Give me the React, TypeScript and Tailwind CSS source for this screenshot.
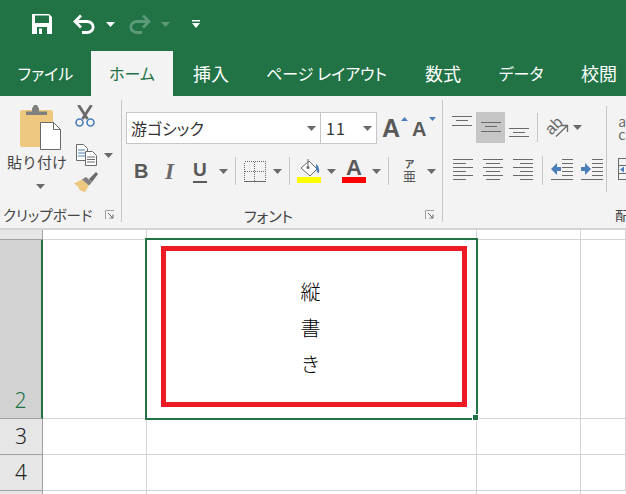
import React from "react"

const GRID_LINE = "border-[#d4d4d4]"

const Caret = ({ color = "#6a6a6a", className = "" }: { color?: string; className?: string }) => (
  <svg width="9" height="5" viewBox="0 0 9 5" className={`shrink-0 ${className}`}>
    <path d="M0 0h9L4.5 5z" fill={color} />
  </svg>
)

// groups of 1px bars, used by all the alignment buttons
const Bars = ({ bars, w = 20, h = 21 }: { bars: number[][]; w?: number; h?: number }) => (
  <svg width={w} height={h} viewBox={`0 0 ${w} ${h}`} shapeRendering="crispEdges" className="shrink-0">
    {bars.map(([x, y, width], i) => (
      <rect key={i} x={x} y={y} width={width} height="1" fill="#6a6a6a" />
    ))}
  </svg>
)

const Launcher = () => (
  <svg width="10" height="10" viewBox="0 0 10 10" className="shrink-0">
    <path d="M.5 9V.5H9" fill="none" stroke="#a0a0a0" />
    <path d="M3 3l5 5M8 4.500V8H4.500" fill="none" stroke="#6a6a6a" />
  </svg>
)

const Sep = ({ className = "" }: { className?: string }) => <div className={`w-px bg-[#c6c6c6] shrink-0 ${className}`} />

const SaveIcon = () => (
  <svg width="20" height="20" viewBox="0 0 20 20">
    <path d="M0 0h17l3 3v17H0z" fill="#fff" />
    <rect x="3" y="1.500" width="14" height="7.500" fill="#217346" />
    <rect x="5" y="13" width="10" height="7" fill="#217346" />
    <rect x="7" y="14.500" width="3" height="5.500" fill="#fff" />
  </svg>
)

const UndoIcon = ({ flip, color }: { flip?: boolean; color: string }) => (
  <svg width="22" height="20" viewBox="0 0 22 20" className={flip ? "-scale-x-100" : ""}>
    <path d="M8 1.500L2 7.500l6 6M2 7.500h12a6.200 5.500 0 0 1 0 11H9" fill="none" stroke={color} strokeWidth="2.800" />
  </svg>
)

const QatCustom = () => (
  <svg width="8" height="8" viewBox="0 0 8 8">
    <path d="M0 0h8v1.500H0zM0 3h8L4 8z" fill="#fff" />
  </svg>
)

const PasteIcon = () => (
  <svg width="41" height="45" viewBox="0 0 41 45">
    <rect x="0" y="5" width="33" height="37" rx="2" fill="#edc87e" />
    <path d="M6 10V6.500h6V3.500L14 0h3l2 3.500v3h8V10z" fill="#7f7f7f" />
    <path d="M20.500 17.500h13l7 7v20h-20z" fill="#fff" stroke="#6a6a6a" />
    <path d="M33.500 17.500v7h7" fill="none" stroke="#6a6a6a" />
  </svg>
)

const ScissorsIcon = () => (
  <svg width="20" height="22" viewBox="0 0 20 22">
    <path d="M3.500 0L12.500 14M16.500 0L7.500 14" stroke="#6a6a6a" strokeWidth="2.800" fill="none" />
    <circle cx="4.500" cy="17.500" r="3.500" fill="none" stroke="#4a7ebb" strokeWidth="1.600" />
    <circle cx="15.500" cy="17.500" r="3.500" fill="none" stroke="#4a7ebb" strokeWidth="1.600" />
  </svg>
)

const CopyIcon = () => (
  <svg width="21" height="22" viewBox="0 0 21 22">
    <path d="M.5.500h7l4 4v12h-11z" fill="#fff" stroke="#6a6a6a" />
    <path d="M2 6h7M2 9h7M2 12h7" stroke="#4a7ebb" />
    <path d="M9.500 7.500h7l4 4v10h-11z" fill="#fff" stroke="#6a6a6a" />
    <path d="M11 13h8M11 15.500h8M11 18h8" stroke="#6a6a6a" />
  </svg>
)

const BrushIcon = () => (
  <svg width="24" height="20" viewBox="0 0 24 20">
    <path d="M0 11.500l8-4 7 6-4 6.500-5-1.500-2-4z" fill="#edc87e" />
    <path d="M8 7.500l4-2.500 6 5-3 3.500z" fill="#7f7f7f" />
    <path d="M15 7l7-7 2 2-6 8z" fill="#6a6a6a" />
  </svg>
)

const BorderIcon = () => (
  <svg width="22" height="21" viewBox="0 0 22 21" shapeRendering="crispEdges">
    <path
      d="M.5.500h21v20H.5zM10.500 .500v20M.5 10.500h21"
      fill="none"
      stroke="#6a6a6a"
      strokeDasharray="1 1"
    />
    <path d="M0 20.500h22" stroke="#6a6a6a" />
  </svg>
)

const FillIcon = () => (
  <svg width="24" height="24" viewBox="0 0 24 24">
    <path d="M4 9l8-7 8 8-7 7z" fill="#fff" stroke="#6a6a6a" />
    <path d="M11 0v8" stroke="#6a6a6a" />
    <circle cx="11" cy="8.500" r="1.500" fill="#6a6a6a" />
    <path d="M19 5c3 2 3.500 6 3 9l-2-1-1-4z" fill="#4a7ebb" />
    <rect x="0" y="18" width="24" height="6" fill="#ffff00" />
  </svg>
)

const OrientationIcon = () => (
  <svg width="21" height="20" viewBox="0 0 21 20" className="overflow-visible">
    <text
      x="7"
      y="13"
      fontSize="16"
      textAnchor="middle"
      fill="#6a6a6a"
      fontFamily="Liberation Sans"
      transform="rotate(-45 7 8)"
    >
      ab
    </text>
    <path d="M9 18.500L20 8M14 7.500h6.500V14" fill="none" stroke="#6a6a6a" strokeWidth="1.300" />
  </svg>
)

const IndentIcon = ({ increase }: { increase?: boolean }) => (
  <svg width="22" height="21" viewBox="0 0 22 21" shapeRendering="crispEdges">
    <path d={increase ? "M0 8h4V4l6 6-6 6v-4H0z" : "M10 8H6V4L0 10l6 6v-4h4z"} fill="#4a7ebb" shapeRendering="auto" />
    {[0, 4, 8, 12, 16].map((y) => (
      <rect key={y} x="11" y={y} width="11" height="1" fill="#6a6a6a" />
    ))}
    <rect x="0" y="20" width="22" height="1" fill="#6a6a6a" />
  </svg>
)

const MergeIcon = () => (
  <svg width="8" height="22" viewBox="0 0 8 22" shapeRendering="crispEdges">
    <path d="M8 .500H.5v21H8M0 7.500h8M0 15.500h8" fill="none" stroke="#6a6a6a" />
    <path d="M2 11.500l4-3v6z" fill="#4a7ebb" shapeRendering="auto" />
  </svg>
)

const tabs = [
  { label: "ファイル", w: "w-[91px]", size: "text-[16px]" },
  { label: "ホーム", w: "w-[82px]", size: "text-[16px]", active: true },
  { label: "挿入", w: "w-[76px]", size: "text-[18px]" },
  { label: "ページ レイアウト", w: "w-[155px]", size: "text-[16px]" },
  { label: "数式", w: "w-[78px]", size: "text-[18px]" },
  { label: "データ", w: "w-[78px]", size: "text-[16px]" },
  { label: "校閲", w: "w-[78px]", size: "text-[18px]" },
]

const Ribbon = () => (
  <div className={`flex h-[134px] pt-[4px] pb-[6px] bg-[#f3f3f3] border-b-2 ${GRID_LINE} text-[#444444]`}>
    {/* clipboard */}
    <div className="w-[122px] shrink-0 flex flex-col border-r border-[#c6c6c6]">
      <div className="flex flex-1">
        <div className="w-[74px] pt-[5px] flex flex-col items-center">
          <div className="pl-[6px]">
            <PasteIcon />
          </div>
          <div className="text-[15px] leading-[24px] whitespace-nowrap">貼り付け</div>
          <Caret className="mt-[10px] ml-[6px]" />
        </div>
        <div className="pt-[5px] flex flex-col">
          <div className="h-[33px] pl-[1px]">
            <ScissorsIcon />
          </div>
          <div className="h-[34px] flex items-center pl-[2px]">
            <CopyIcon />
            <Caret className="ml-[7px] mt-[1px]" />
          </div>
          <BrushIcon />
        </div>
      </div>
      <div className="h-[16px] pt-[2px] flex items-center justify-between pl-[3px] pr-[6px]">
        <span className="text-[14.500px] leading-none whitespace-nowrap [font-feature-settings:'palt']">クリップボード</span>
        <Launcher />
      </div>
    </div>

    {/* font */}
    <div className="w-[321px] shrink-0 flex flex-col border-r border-[#c6c6c6]">
      <div className="flex-1 pl-[4px] pt-[12px]">
        <div className="flex items-center h-[32px]">
          <div className="w-[195px] h-full flex items-center justify-between pl-[4px] pr-[4px] bg-white border border-[#c6c6c6]">
            <span className="text-[16px] leading-none [font-feature-settings:'palt'] text-[#333333]">游ゴシック</span>
            <Caret />
          </div>
          <div className="w-[57px] h-full -ml-px flex items-center justify-between pl-[5px] pr-[4px] bg-white border border-[#c6c6c6]">
            <span className="text-[16px] leading-none tracking-[1px] text-[#333333]">11</span>
            <Caret />
          </div>
          <div className="relative ml-[5px] w-[26px] h-full font-['Liberation_Sans',sans-serif] font-bold text-[25px] leading-[32px] text-[#595959]">
            A
            <svg width="7" height="4" viewBox="0 0 7 4" className="absolute right-0 top-[5px]">
              <path d="M0 4h7L3.500 0z" fill="#4a7ebb" />
            </svg>
          </div>
          <div className="relative ml-[4px] w-[24px] h-full font-['Liberation_Sans',sans-serif] font-bold text-[20px] leading-[34px] text-[#595959]">
            A
            <svg width="7" height="4" viewBox="0 0 7 4" className="absolute right-0 top-[5px]">
              <path d="M0 0h7L3.500 4z" fill="#4a7ebb" />
            </svg>
          </div>
        </div>
        <div className="flex items-center h-[30px] mt-[12px] text-[#595959]">
          <span className="w-[15px] ml-[8px] font-['Liberation_Sans',sans-serif] font-bold text-[20px] leading-none">B</span>
          <span className="w-[12px] ml-[16px] font-['Liberation_Serif',serif] font-bold italic text-[23px] leading-none text-[#6a6a6a]">I</span>
          <span className="w-[14px] ml-[16px] font-['Liberation_Sans',sans-serif] font-bold text-[19px] leading-[22px] border-b-2 border-[#595959]">U</span>
          <Caret className="ml-[12px]" />
          <Sep className="h-[28px] ml-[7px]" />
          <div className="ml-[8px]">
            <BorderIcon />
          </div>
          <Caret className="ml-[7px]" />
          <Sep className="h-[28px] ml-[7px]" />
          <div className="ml-[7px]">
            <FillIcon />
          </div>
          <Caret className="ml-[6px]" />
          <div className="ml-[6px] w-[24px] flex flex-col items-center">
            <span className="font-['Liberation_Sans',sans-serif] font-bold text-[22px] leading-[18px] text-[#595959]">A</span>
            <div className="w-full h-[6px] bg-[#ff0000]" />
          </div>
          <Caret className="ml-[6px]" />
          <Sep className="h-[28px] ml-[7px]" />
          <div className="ml-[14px] w-[13px] flex flex-col items-center text-[#595959]">
            <span className="text-[10px] leading-[10px] font-bold">ア</span>
            <span className="text-[13px] leading-[14px]">亜</span>
          </div>
          <Caret className="ml-[11px]" />
        </div>
      </div>
      <div className="h-[16px] pt-[2px] flex items-center justify-between pl-[122px] pr-[7px]">
        <span className="text-[15px] leading-none whitespace-nowrap [font-feature-settings:'palt']">フォント</span>
        <Launcher />
      </div>
    </div>

    {/* alignment */}
    <div className="flex-1 min-w-0 overflow-hidden pt-[12px] pl-[5px] flex flex-col">
      <div className="flex h-[31px] items-start">
        <div className="w-[30px] h-full flex justify-center pt-[4px]">
          <Bars h={10} bars={[[0, 0, 20], [4, 4, 12], [0, 9, 20]]} />
        </div>
        <div className="w-[30px] h-full flex justify-center pt-[10px] bg-[#c6c6c6]">
          <Bars h={10} bars={[[0, 0, 20], [4, 4, 12], [0, 9, 20]]} />
        </div>
        <div className="w-[30px] h-full flex justify-center pt-[16px]">
          <Bars h={10} bars={[[0, 0, 20], [4, 4, 12], [0, 8, 20]]} />
        </div>
        <Sep className="h-[29px] ml-[4px] mt-px" />
        <div className="ml-[9px] mt-[6px]">
          <OrientationIcon />
        </div>
        <Caret className="ml-[5px] mt-[13px]" />
        <Sep className="h-[86px] ml-[24px] -mt-[6px]" />
        <div className="ml-[11px] mt-[3px] text-[14px] leading-[13px] text-[#6a6a6a]">
          a<br />c
        </div>
      </div>
      <div className="flex h-[30px] mt-[16px] items-start">
        <div className="w-[30px] flex justify-center">
          <Bars bars={[[0, 0, 20], [0, 4, 13], [0, 8, 20], [0, 12, 13], [0, 16, 20], [0, 20, 13]]} />
        </div>
        <div className="w-[30px] flex justify-center">
          <Bars bars={[[0, 0, 20], [3, 4, 14], [0, 8, 20], [3, 12, 14], [0, 16, 20], [3, 20, 14]]} />
        </div>
        <div className="w-[30px] flex justify-center">
          <Bars bars={[[0, 0, 20], [7, 4, 13], [0, 8, 20], [7, 12, 13], [0, 16, 20], [7, 20, 13]]} />
        </div>
        <Sep className="h-[29px] ml-[4px] -mt-[3px]" />
        <div className="ml-[8px]">
          <IndentIcon />
        </div>
        <div className="ml-[8px]">
          <IndentIcon increase />
        </div>
        <div className="ml-[15px] -mt-px">
          <MergeIcon />
        </div>
      </div>
      <div className="mt-auto pl-[167px] pt-[2px] text-[15px] h-[16px] leading-none whitespace-nowrap">配置</div>
    </div>
  </div>
)

const RowHeader = ({ n, active }: { n: number; active?: boolean }) => (
  <div
    className={`flex justify-center font-['Noto_Sans',sans-serif] font-light text-[21px] border-b ${
      active
        ? "items-end leading-[32px] pb-[2px] bg-[#d2d2d2] text-[#217346] border-r-2 border-r-[#217346] border-b-[#9f9f9f]"
        : "items-center leading-none bg-[#e6e6e6] text-[#222222] border-r border-r-[#9f9f9f] border-b-[#9f9f9f]"
    }`}
  >
    {n}
  </div>
)

const Cell = () => <div className={`border-r border-b ${GRID_LINE}`} />

const Sheet = () => (
  <div className="grid grid-cols-[43px_104px_330px_104px_45px] grid-rows-[10px_179px_36px_36px_3px] bg-white">
    <div className="bg-[#e6e6e6] border-r border-b border-[#9f9f9f]" />
    <Cell />
    <Cell />
    <Cell />
    <Cell />

    <RowHeader n={2} active />
    <Cell />
    <div className={`relative border-r border-b ${GRID_LINE}`}>
      {/* selection frame and the red highlight sit over the cell */}
      <div className="absolute -left-[2px] -top-[2px] w-[333px] h-[182px] border-2 border-[#217346]" />
      <div className="absolute left-[325px] top-[174px] w-[7px] h-[7px] bg-[#217346] border border-white" />
      <div className="absolute left-[14px] top-[6px] w-[306px] h-[161px] border-[5px] border-[#ed1c24]" />
      <div className="h-full pt-[34px] pr-[2px] flex flex-col items-center font-light text-[20px] leading-[36px] text-black">
        <span>縦</span>
        <span>書</span>
        <span>き</span>
      </div>
    </div>
    <Cell />
    <Cell />

    <RowHeader n={3} />
    <Cell />
    <Cell />
    <Cell />
    <Cell />

    <RowHeader n={4} />
    <Cell />
    <Cell />
    <Cell />
    <Cell />

    <div className="bg-[#e6e6e6] border-r border-[#9f9f9f]" />
    <div className={`border-r ${GRID_LINE}`} />
    <div className={`border-r ${GRID_LINE}`} />
    <div className={`border-r ${GRID_LINE}`} />
    <div />
  </div>
)

export default function App() {
  return (
    <div className="w-[626px] h-[494px] overflow-hidden bg-white font-['Noto_Sans_CJK_JP',sans-serif]">
      {/* title bar */}
      <div className="bg-[#217346] h-[96px] flex flex-col">
        <div className="h-[51px] flex items-center pl-[32px] pb-[3px]">
          <SaveIcon />
          <div className="ml-[21px]">
            <UndoIcon color="#ffffff" />
          </div>
          <Caret color="#ffffff" className="ml-[11px]" />
          <div className="ml-[14px]">
            <UndoIcon flip color="#5c9a78" />
          </div>
          <Caret color="#5c9a78" className="ml-[10px]" />
          <div className="ml-[22px]">
            <QatCustom />
          </div>
        </div>
        <div className="h-[45px] flex items-stretch whitespace-nowrap [font-feature-settings:'palt']">
          {tabs.map((tab) => (
            <div
              key={tab.label}
              className={`${tab.w} ${tab.size} shrink-0 flex items-center justify-center pb-[1px] ${
                tab.active ? "bg-[#f3f3f3] text-[#217346]" : "text-white"
              }`}
            >
              {tab.label}
            </div>
          ))}
        </div>
      </div>
      <Ribbon />
      <Sheet />
    </div>
  )
}
